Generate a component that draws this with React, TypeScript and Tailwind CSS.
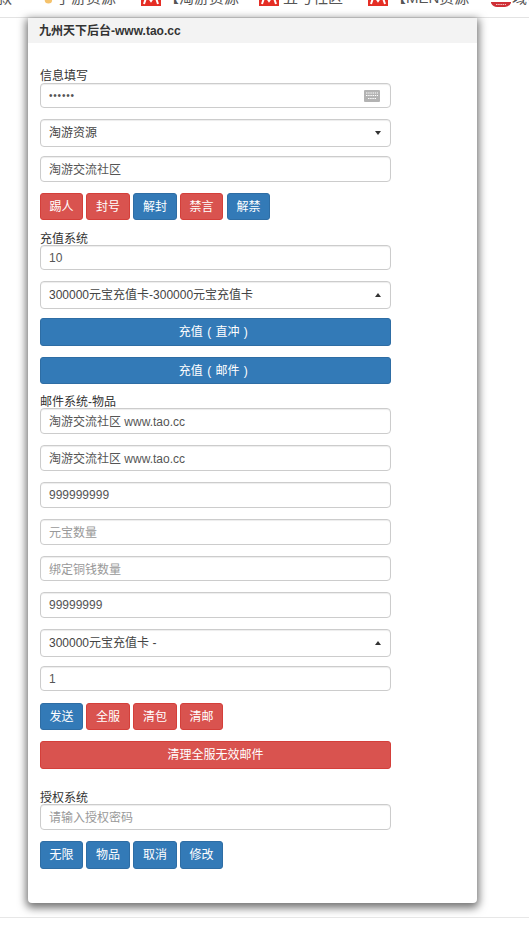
import React from 'react';

const font = "font-['Liberation_Sans','Noto_Sans_CJK_SC',sans-serif]";

const inputBox = 'w-full border border-[#ccc] rounded-[4px] px-[8px] flex items-center text-[12px] bg-white shadow-[inset_0_1px_1px_rgba(0,0,0,0.075)]';

const MIcon = ({ className = '' }: { className?: string }) => (
  <svg viewBox="0 0 20 14" className={`w-[20px] h-[14px] shrink-0 ${className}`}>
    <rect width="20" height="14" fill="#e52e25" />
    <path d="M3 12 L6 3 L10 9 L14 3 L17 12" fill="none" stroke="#fff" strokeWidth="2" />
  </svg>
);

const Mark = ({ left, children }: { left: number; children: React.ReactNode }) => (
  <div className="absolute bottom-[9px] flex items-end whitespace-nowrap" style={{ left }}>
    {children}
  </div>
);

const Field = ({ h = 'h-[26px]', mt = 'mt-[11px]', value, placeholder }: { h?: string; mt?: string; value?: string; placeholder?: string }) => {
  const text = value || placeholder || '';
  const cjk = /[^\x00-\x7f]/.test(text);
  return (
    <div className={`${inputBox} ${h} ${mt} ${value ? 'text-[#555]' : 'text-[#999]'} ${cjk ? 'pt-[2px]' : ''}`}>
      {text}
    </div>
  );
};

const Select = ({ value, up, mt = 'mt-[11px]' }: { value: string; up?: boolean; mt?: string }) => (
  <div className={`${inputBox} h-[28px] ${mt} text-[#444] justify-between pr-[8px]`}>
    <span>{value}</span>
    {up ? (
      <span className="w-0 h-0 border-x-[3px] border-x-transparent border-b-[4px] border-b-[#333] mr-[1px]" />
    ) : (
      <span className="w-0 h-0 border-x-[3px] border-x-transparent border-t-[4px] border-t-[#333] mr-[1px]" />
    )}
  </div>
);

const Btn = ({ color, w = 'w-[43px]', className = '', children }: { color: 'red' | 'blue'; w?: string; className?: string; children: React.ReactNode }) => (
  <button className={`${w} h-full rounded-[3px] border text-white text-[12px] ${className} ${color === 'red' ? 'bg-[#d9534f] border-[#d43f3a]' : 'bg-[#337ab7] border-[#2e6da4]'}`}>
    {children}
  </button>
);

const Wide = ({ color, mt, h = 'h-[28px]', children }: { color: 'red' | 'blue'; mt: string; h?: string; children: React.ReactNode }) => (
  <button className={`w-full ${h} ${mt} rounded-[3px] border text-white text-[12px] [word-spacing:1px] ${color === 'red' ? 'bg-[#d9534f] border-[#d43f3a]' : 'bg-[#337ab7] border-[#2e6da4]'}`}>
    {children}
  </button>
);

const Label = ({ mt, children }: { mt: string; children: React.ReactNode }) => (
  <div className={`${mt} h-[14px] leading-[16px] text-[12px] text-[#333]`}>{children}</div>
);

export default function App() {
  return (
    <div className={`${font} w-[529px] h-[940px] bg-white overflow-hidden`}>
      <div className="relative h-[18px] border-b border-[#e3e3e3] overflow-hidden text-[15px] leading-[20px] text-[#555]">
        <Mark left={-18}>
          <span>下款</span>
        </Mark>
        <Mark left={41}>
          <svg viewBox="0 0 14 14" className="w-[13px] h-[14px] mr-[2px] mb-[3px] shrink-0">
            <circle cx="8" cy="9" r="4" fill="#f5c26b" />
            <circle cx="3" cy="5" r="2" fill="#f2a43a" />
          </svg>
          <span>手游资源</span>
        </Mark>
        <Mark left={141}>
          <MIcon className="mb-[2px] mr-[3px]" />
          <span>【淘游资源</span>
        </Mark>
        <Mark left={259}>
          <MIcon className="mb-[2px] mr-[4px]" />
          <span>五号社区</span>
        </Mark>
        <Mark left={368}>
          <MIcon className="mb-[2px] mr-[3px]" />
          <span>【MEN资源</span>
        </Mark>
        <Mark left={491}>
          <svg viewBox="0 0 20 5" className="w-[20px] h-[5px] mr-[1px] mb-[1px] shrink-0">
            <path d="M0 0 H20 V1 Q18 5 14 5 H6 Q2 5 0 1 Z" fill="#cf2f36" />
            <path d="M5 2.5 H15" stroke="#f3c4c4" strokeWidth="1" strokeDasharray="1.5 0.7" />
          </svg>
          <span>域名</span>
        </Mark>
      </div>

      <div className="relative w-[449px] h-[885px] ml-[28px] bg-white rounded-b-[4px] shadow-[0_3px_8px_2px_rgba(0,0,0,0.55)]">
        <div className="h-[25px] px-[11px] flex items-center bg-[#f3f3f3] text-[12px] font-bold text-[#333]">
          九州天下后台-www.tao.cc
        </div>
        <div className="w-[351px] ml-[12px]">
          <Label mt="mt-[25px]">信息填写</Label>
          <div className={`${inputBox} h-[25px] mt-[1px] justify-between pr-[10px] text-[#555]`}>
            <span className="text-[10px] tracking-[0.8px]">••••••</span>
            <svg viewBox="0 0 16 12" className="w-[16px] h-[12px]">
              <rect width="16" height="12" rx="1" fill="#b3b3b3" />
              <path d="M2 3h12M2 5.5h12M4 8.5h8" stroke="#fff" strokeWidth="1.2" strokeDasharray="1.4 0.8" />
            </svg>
          </div>
          <Select value="淘游资源" />
          <Field h="h-[26px]" mt="mt-[9px]" value="淘游交流社区" />
          <div className="flex gap-[3px] h-[27px] mt-[11px]">
            <Btn color="red">踢人</Btn>
            <Btn color="red" w="w-[44px]">封号</Btn>
            <Btn color="blue" w="w-[44px]">解封</Btn>
            <Btn color="red">禁言</Btn>
            <Btn color="blue" className="ml-[1px]">解禁</Btn>
          </div>
          <Label mt="mt-[11px]">充值系统</Label>
          <Field h="h-[25px]" mt="mt-[0px]" value="10" />
          <Select value="300000元宝充值卡-300000元宝充值卡" up />
          <Wide color="blue" mt="mt-[9px]">充值 ( 直冲 )&nbsp;</Wide>
          <Wide color="blue" mt="mt-[11px]" h="h-[27px]">充值 ( 邮件 )&nbsp;</Wide>
          <Label mt="mt-[10px]">邮件系统-物品</Label>
          <Field mt="mt-[0px]" value="淘游交流社区 www.tao.cc" />
          <Field value="淘游交流社区 www.tao.cc" />
          <Field value="999999999" />
          <Field placeholder="元宝数量" />
          <Field h="h-[25px]" placeholder="绑定铜钱数量" />
          <Field value="99999999" />
          <Select value="300000元宝充值卡 -" up />
          <Field h="h-[25px]" mt="mt-[9px]" value="1" />
          <div className="flex gap-[3px] h-[27px] mt-[12px]">
            <Btn color="blue">发送</Btn>
            <Btn color="red" w="w-[44px]">全服</Btn>
            <Btn color="red" w="w-[44px]">清包</Btn>
            <Btn color="red">清邮</Btn>
          </div>
          <Wide color="red" mt="mt-[11px]">清理全服无效邮件</Wide>
          <Label mt="mt-[21px]">授权系统</Label>
          <Field mt="mt-[0px]" placeholder="请输入授权密码" />
          <div className="flex gap-[3px] h-[28px] mt-[11px]">
            <Btn color="blue">无限</Btn>
            <Btn color="blue" w="w-[44px]">物品</Btn>
            <Btn color="blue" w="w-[44px]">取消</Btn>
            <Btn color="blue">修改</Btn>
          </div>
        </div>
      </div>
      <div className="mt-[14px] border-t border-[#e7e7e7]" />
    </div>
  );
}
